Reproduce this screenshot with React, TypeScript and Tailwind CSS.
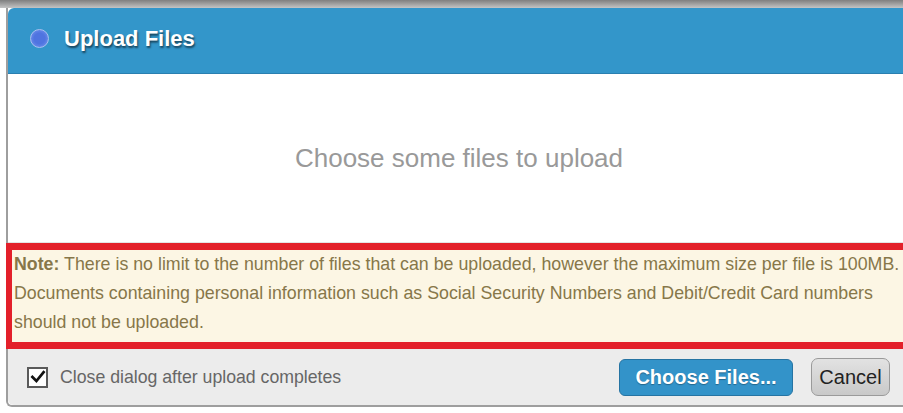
import React from 'react';

function CheckIcon() {
  return (
    <svg viewBox="0 0 20 20" className="w-[16px] h-[16px]">
      <path d="M3 10 L8 15 L17 4" fill="none" stroke="#111" strokeWidth="3.4" strokeLinecap="square" strokeLinejoin="miter" />
    </svg>
  );
}

export default function App() {
  const font = { fontFamily: '"Liberation Sans", Arial, sans-serif' };
  return (
    <div className="w-[903px] h-[413px] overflow-hidden bg-white" style={font}>
      <div className="h-[8px] bg-gradient-to-b from-[#7f7f7f] to-[#c4c4c4]" />
      <div className="ml-[6px] w-[904px] border-l-2 border-b-2 border-[#9e9e9e] rounded-bl-[6px]">
        {/* title bar */}
        <div className="h-[66px] bg-[#3396ca] border-b border-[#2a7fb0] flex items-center pl-[22px] pb-[4px] rounded-tl-[6px]">
          <div className="w-[19px] h-[19px] rounded-full bg-[radial-gradient(circle_at_50%_50%,#4f74e0_45%,#7d9cf2)] border border-[#a9bff0]" />
          <div className="ml-[15px] text-white font-bold text-[22px] [text-shadow:1px_2px_2px_rgba(0,0,0,0.55)]">Upload Files</div>
        </div>

        {/* drop area */}
        <div className="h-[169px] bg-white flex items-center justify-center border-b border-[#e4e4e4]">
          <span className="text-[26px] text-[#999]">Choose some files to upload</span>
        </div>

        {/* notice */}
        <div className="-ml-[2px] border-[#e3202a] border-t-[7px] border-b-[7px] border-x-[6px] bg-[#fcf6e4] pl-[2px] pb-[5px] text-[17.8px] leading-[29px] text-[#877749]">
          <b>Note:</b> There is no limit to the number of files that can be uploaded, however the maximum size per file is 100MB.
          <br />
          Documents containing personal information such as Social Security Numbers and Debit/Credit Card numbers
          <br />
          should not be uploaded.
        </div>

        {/* footer */}
        <div className="h-[56px] bg-[#ececec] flex items-center pl-[19px] pr-[20px] rounded-bl-[6px]">
          <div className="w-[21px] h-[21px] border-2 border-[#5a5a5a] bg-white flex items-center justify-center">
            <CheckIcon />
          </div>
          <span className="ml-[12px] text-[17.7px] text-[#666]">Close dialog after upload completes</span>
          <div className="ml-auto flex items-center gap-[18px]">
            <button className="w-[174px] h-[37px] rounded-[6px] bg-[#3393c9] border border-[#2674a3] text-white font-bold text-[20px] [text-shadow:0_1px_1px_rgba(0,0,0,0.3)]">
              Choose Files...
            </button>
            <button className="w-[79px] h-[38px] rounded-[7px] bg-gradient-to-b from-[#e2e2e2] to-[#c9c9c9] border border-[#9a9a9a] text-[20px] text-[#222]">
              Cancel
            </button>
          </div>
        </div>
      </div>
    </div>
  );
}
